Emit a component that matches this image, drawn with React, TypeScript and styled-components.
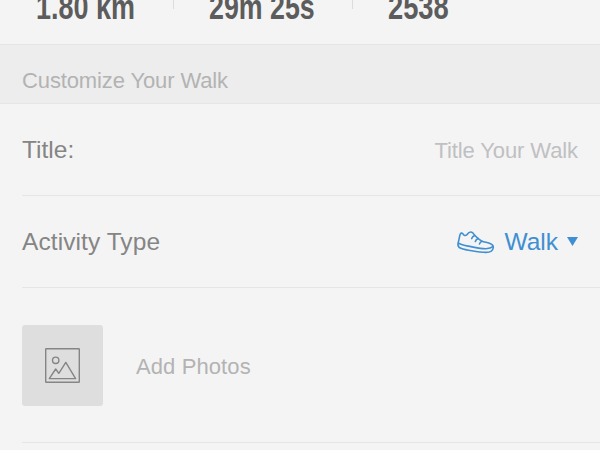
import React from "react";
import styled, { createGlobalStyle } from "styled-components";

const Global = createGlobalStyle`
  * { box-sizing: border-box; }
  body { margin: 0; background: #f4f4f4; overflow: hidden; }
`;

const Screen = styled.main`
  width: 600px;
  height: 450px;
  overflow: hidden;
  background: #f4f4f4;
  font-family: "Liberation Sans", Arial, sans-serif;
  color: #858585;
`;

const Stats = styled.section`
  display: grid;
  grid-template-columns: 174px 179px 1fr;
  height: 44px;
`;

const Stat = styled.div`
  display: flex;
  align-items: flex-start;
  padding-left: 35px;
  height: 9px;
  border-right: 1px solid #dcdcdc;
  &:first-child { padding-left: 36px; }
  &:last-child { border-right: 0; }
`;

const StatValue = styled.span<{ $scale: number }>`
  margin-top: -12px;
  font-size: 35px;
  line-height: 38px;
  font-weight: 700;
  color: #5c5c5c;
  white-space: nowrap;
  transform: scaleX(${(p) => p.$scale});
  transform-origin: left;
`;

const SectionHeader = styled.h2`
  margin: 0;
  height: 60px;
  padding: 23px 22px 0;
  background: #ededed;
  border-top: 1px solid #e4e4e4;
  border-bottom: 1px solid #e6e6e6;
  font-size: 22px;
  line-height: 25px;
  font-weight: 400;
  letter-spacing: -0.12px;
  color: #b3b3b3;
`;

const Row = styled.div<{ $height: number }>`
  display: flex;
  align-items: center;
  height: ${(p) => p.$height}px;
  margin-left: 22px;
  padding-right: 22px;
  border-bottom: 1px solid #e5e5e5;
`;

const Label = styled.span<{ $spacing?: number }>`
  flex: 1;
  font-size: 24.5px;
  line-height: 28px;
  letter-spacing: ${(p) => p.$spacing ?? 0}px;
`;

const Placeholder = styled.span`
  margin-top: 2px;
  font-size: 22px;
  line-height: 25px;
  letter-spacing: -0.1px;
  color: #bfc0c2;
`;

const Picker = styled.div`
  display: flex;
  align-items: center;
  color: #3f8fd2;
  font-size: 24.5px;
  line-height: 28px;
`;

const PickerText = styled.span`
  margin: 0 9px 0 9px;
`;

const Thumb = styled.div`
  display: flex;
  align-items: center;
  justify-content: center;
  width: 81px;
  height: 81px;
  margin-right: 33px;
  border-radius: 3px;
  background: #dedede;
`;

const AddLabel = styled.span`
  margin-top: 2px;
  font-size: 22px;
  line-height: 25px;
  letter-spacing: 0.1px;
  color: #b3b3b3;
`;

const Shoe = () => (
  <svg width="39" height="24" viewBox="0 0 39 24" fill="none" stroke="currentColor" strokeWidth="1.6" strokeLinecap="round" strokeLinejoin="round">
    <path d="M4.2 4.3C4.7 3 5.9 2.7 6.8 3.7c.9 1.9 2.8 2.5 4.3.8 1.2-1.8 2.9-2.8 4.7-2.3 1.4.5 1.8 1.8 2.9 3.1 1.9 2.2 4.3 4.2 6.8 5.7 2.5 1.3 5.1 1.2 7.9 2.2 2.7.9 4.1 2.1 3.9 4.3-.3 3-3.2 4.9-7.4 4.9-6.3 0-11.5-1.2-17.3-2.2-4.1-.7-7.1-1.4-9.3-2.7-1.3-1-1.6-3.2-1-5.2.8-2.6 1-5.6 1.9-8Z" />
    <path d="M2.5 13.2c3.7 2.4 8.1 2.6 12.4 3.4 5.1 1 9.8 2.2 15.1 2.1 3-.1 5.3-.7 6.9-2M18.7 5.4c-1.7.5-2.5 1.6-3 3.2M22.2 8.4c-1.7.5-2.4 1.5-2.9 3.1M26.1 11.2c-1.5.4-2.2 1.3-2.6 2.7" />
  </svg>
);

const Caret = () => (
  <svg width="11" height="9" viewBox="0 0 11 9" fill="currentColor">
    <path d="M0 0h11L5.5 9Z" />
  </svg>
);

const Picture = () => (
  <svg width="35" height="35" viewBox="0 0 35 35" fill="none" stroke="#858585" strokeWidth="1.4" strokeLinejoin="round">
    <rect x=".7" y=".7" width="33.6" height="33.6" rx=".5" />
    <circle cx="10.7" cy="12.3" r="3.2" />
    <path d="M4.3 30.6 10.7 21l3.1 4.3L20.8 14.4l9.8 16.2Z" />
  </svg>
);

export default function App() {
  return (
    <Screen>
      <Global />
      <Stats>
        <Stat><StatValue $scale={0.77}>1.80 km</StatValue></Stat>
        <Stat><StatValue $scale={0.765}>29m 25s</StatValue></Stat>
        <Stat><StatValue $scale={0.78}>2538</StatValue></Stat>
      </Stats>
      <SectionHeader>Customize Your Walk</SectionHeader>
      <Row $height={92}>
        <Label>Title:</Label>
        <Placeholder>Title Your Walk</Placeholder>
      </Row>
      <Row $height={92}>
        <Label $spacing={0.08}>Activity Type</Label>
        <Picker>
          <Shoe />
          <PickerText>Walk</PickerText>
          <Caret />
        </Picker>
      </Row>
      <Row $height={155}>
        <Thumb><Picture /></Thumb>
        <AddLabel>Add Photos</AddLabel>
      </Row>
    </Screen>
  );
}
